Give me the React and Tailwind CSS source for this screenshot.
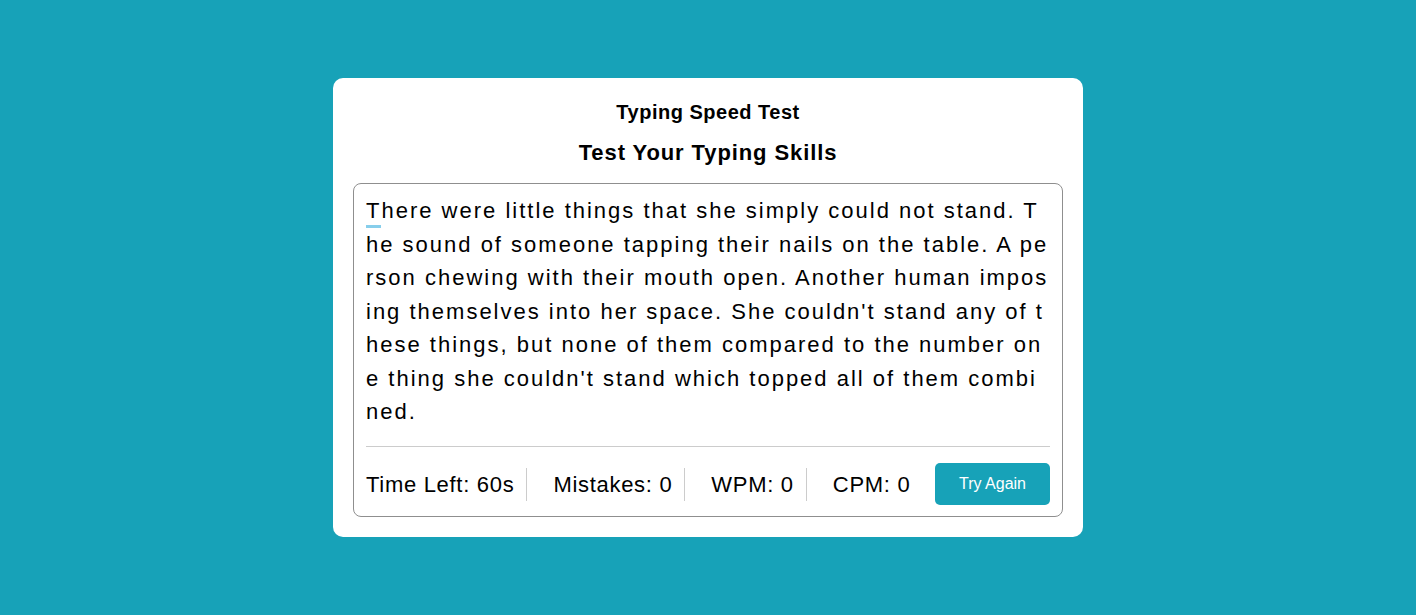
// Typing Speed Test — single card page

const PARAGRAPH =
  "There were little things that she simply could not stand. The sound of someone tapping their nails on the table. A person chewing with their mouth open. Another human imposing themselves into her space. She couldn't stand any of these things, but none of them compared to the number one thing she couldn't stand which topped all of them combined.";

const STATS = [
  { label: "Time Left:", value: "60s" },
  { label: "Mistakes:", value: "0" },
  { label: "WPM:", value: "0" },
  { label: "CPM:", value: "0" },
];

export default function App() {
  const first = PARAGRAPH[0];
  const rest = PARAGRAPH.slice(1);

  return (
    <div
      className="min-h-screen flex items-center justify-center bg-[#17a2b8]"
      style={{ fontFamily: '"Liberation Sans", Arial, sans-serif' }}
    >
      <div className="w-[750px] bg-white rounded-[10px] px-5 pt-[22px] pb-5">
        <h2 className="text-center text-[20px] leading-[24px] font-bold tracking-[0.5px] text-black">
          Typing Speed Test
        </h2>
        <h1 className="mt-4 text-center text-[22px] leading-[26px] font-bold tracking-[0.9px] text-black">
          Test Your Typing Skills
        </h1>

        {/* content box */}
        <div className="mt-[17px] border border-[#8f8f8f] rounded-lg px-3 pt-[10px]">
          <p className="text-[22px] leading-[33.6px] tracking-[2px] break-all text-black">
            <span className="relative">
              {first}
              <span className="absolute left-0 right-0 bottom-[-5px] h-[3px] bg-[#87ceeb]" />
            </span>
            {rest}
          </p>

          <div className="mt-[17px] border-t border-[#cccccc] flex items-center justify-between pt-4 pb-[11px]">
            <ul className="flex items-center">
              {STATS.map((s, i) => (
                <li
                  key={s.label}
                  className={`text-[22px] tracking-[0.7px] text-black ${i > 0 ? "pl-[26px]" : ""} ${
                    i < STATS.length - 1 ? "pr-3 border-r border-[#cccccc]" : ""
                  }`}
                >
                  {s.label} {s.value}
                </li>
              ))}
            </ul>
            <button
              type="button"
              className="w-[115px] h-[42px] rounded-[5px] bg-[#17a2b8] text-white text-[16px]"
            >
              Try Again
            </button>
          </div>
        </div>
      </div>
    </div>
  );
}
